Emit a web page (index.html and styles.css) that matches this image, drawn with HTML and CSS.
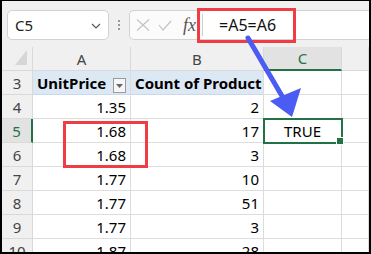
FILE: index.html
```html
<!DOCTYPE html>
<html lang="en">
<head>
  <meta charset="UTF-8" />
  <title>Excel - Compare cells</title>
  <link rel="stylesheet" href="styles.css">
</head>
<body>

<div class="frame">
  <div class="toolbar">
    <div class="namebox">
      <span>C5</span>
      <svg class="chev" width="10" height="6" viewBox="0 0 10 6"><path d="M1 1 L5 5 L9 1" fill="none" stroke="#555" stroke-width="1.2"/></svg>
    </div>
    <div class="dots"><i></i><i></i><i></i></div>
    <div class="fxbox">
      <svg class="tool" width="14" height="12" viewBox="0 0 14 12"><path d="M1 0.5 L13 11.5 M13 0.5 L1 11.5" stroke="#c4c4c4" stroke-width="1.2"/></svg>
      <svg class="tool" width="14" height="11" viewBox="0 0 14 11"><path d="M1 5 L5 10 L13 1" fill="none" stroke="#c4c4c4" stroke-width="1.2"/></svg>
      <span class="fx">fx</span>
      <div class="sep"></div>
      <div class="formula">=A5=A6</div>
    </div>
  </div>

  <div class="sheet">
    <div class="corner">
      <svg width="12" height="15" viewBox="0 0 12 15"><polygon points="12,0 12,15 0,15" fill="#d6d6d6"/></svg>
    </div>
    <div class="colhead">A</div>
    <div class="colhead">B</div>
    <div class="colhead active">C</div>
    <div class="colhead"></div>

    <div class="rowhead">3</div>
    <div class="cell pivot">UnitPrice
      <span class="filter"><svg width="7" height="4" viewBox="0 0 7 4"><polygon points="0,0 7,0 3.5,4" fill="#666"/></svg></span>
    </div>
    <div class="cell pivot">Count of Product</div>
    <div class="cell"></div>
    <div class="cell"></div>

    <div class="rowhead">4</div>
    <div class="cell num">1.35</div>
    <div class="cell num">2</div>
    <div class="cell"></div>
    <div class="cell"></div>

    <div class="rowhead active">5</div>
    <div class="cell num">1.68</div>
    <div class="cell num">17</div>
    <div class="cell selected">TRUE<span class="handle"></span></div>
    <div class="cell"></div>

    <div class="rowhead">6</div>
    <div class="cell num">1.68</div>
    <div class="cell num">3</div>
    <div class="cell"></div>
    <div class="cell"></div>

    <div class="rowhead">7</div>
    <div class="cell num">1.77</div>
    <div class="cell num">10</div>
    <div class="cell"></div>
    <div class="cell"></div>

    <div class="rowhead">8</div>
    <div class="cell num">1.77</div>
    <div class="cell num">51</div>
    <div class="cell"></div>
    <div class="cell"></div>

    <div class="rowhead">9</div>
    <div class="cell num">1.77</div>
    <div class="cell num">3</div>
    <div class="cell"></div>
    <div class="cell"></div>

    <div class="rowhead">10</div>
    <div class="cell num">1.87</div>
    <div class="cell num">28</div>
    <div class="cell"></div>
    <div class="cell"></div>
  </div>
</div>

<!-- callouts drawn over the screenshot -->
<svg class="marks" width="371" height="254" viewBox="0 0 371 254">
  <rect x="198.5" y="9.5" width="96" height="32" fill="none" stroke="#ee3d45" stroke-width="3"/>
  <rect x="64.5" y="122.5" width="82" height="44" fill="none" stroke="#ee3d45" stroke-width="3"/>
  <line x1="248" y1="38" x2="282" y2="96" stroke="#4a5cf2" stroke-width="5" stroke-linecap="round"/>
  <polygon points="270,101 301,88 292,117" fill="#4a5cf2"/>
</svg>

</body>
</html>
```

FILE: styles.css
```css
body {
  margin: 0;
  position: relative;
  font-family: 'Noto Sans', sans-serif;
  color: #000;
}

.frame {
  width: 371px;
  height: 254px;
  box-sizing: border-box;
  border: 2px solid #000;
  border-top-width: 1px;
  overflow: hidden;
  background: #fff;
}

.toolbar {
  height: 46px;
  box-sizing: border-box;
  padding: 9px 0 0 5px;
  background: #f0f0f0;
  display: flex;
  align-items: flex-start;
}

.namebox {
  width: 102px;
  height: 30px;
  box-sizing: border-box;
  border: 1px solid #d2d2d2;
  border-radius: 5px;
  background: #fff;
  display: flex;
  align-items: center;
  justify-content: space-between;
  padding: 0 7px 0 7px;
  font-size: 15px;
  color: #222;
}

.chev {
  margin-top: 2px;
}

.dots {
  width: 20px;
  height: 30px;
  display: flex;
  flex-direction: column;
  align-items: center;
  justify-content: center;
  gap: 2px;
}

.dots i {
  width: 2px;
  height: 2px;
  background: #999;
}

.fxbox {
  flex: 1;
  height: 30px;
  box-sizing: border-box;
  border: 1px solid #d2d2d2;
  border-right: none;
  border-radius: 5px 0 0 5px;
  background: #fbfbfb;
  display: flex;
  align-items: center;
  padding-left: 6px;
}

.tool {
  margin-right: 8px;
}

.fx {
  font-family: 'Liberation Serif', serif;
  font-style: italic;
  font-size: 18px;
  color: #555;
  margin-left: 3px;
}

.sep {
  width: 1px;
  height: 22px;
  background: #cfcfcf;
  margin-left: 6px;
}

.formula {
  flex: 1;
  height: 100%;
  background: #fff;
  display: flex;
  align-items: center;
  padding-left: 16px;
  font-size: 16px;
  color: #111;
}

.sheet {
  display: grid;
  grid-template-columns: 31px 98px 133px 78px 1fr;
  grid-auto-rows: 24px;
  font-size: 15px;
}

.corner,
.colhead,
.rowhead {
  background: #f0f0f0;
  color: #444;
  box-sizing: border-box;
  border-right: 1px solid #d9d9d9;
  border-bottom: 1px solid #d9d9d9;
  display: flex;
  align-items: center;
  justify-content: center;
}

.corner {
  align-items: flex-end;
  justify-content: flex-end;
  padding: 0 5px 5px 0;
}

.colhead.active {
  background: #e2e2e2;
  color: #217346;
  border-bottom: 2px solid #217346;
}

.rowhead.active {
  background: #e2e2e2;
  color: #217346;
  border-right: 2px solid #217346;
}

.cell {
  box-sizing: border-box;
  border-right: 1px solid #dcdcdc;
  border-bottom: 1px solid #dcdcdc;
  display: flex;
  align-items: center;
  padding: 0 4px;
  white-space: nowrap;
}

.pivot {
  background: #dde8f5;
  font-weight: bold;
  border-bottom-color: #c9d8ea;
  position: relative;
}

.filter {
  position: absolute;
  right: 4px;
  bottom: 1px;
  width: 13px;
  height: 15px;
  box-sizing: border-box;
  border: 1px solid #9a9a9a;
  background: #f6f6f6;
  display: flex;
  align-items: center;
  justify-content: center;
}

.num {
  justify-content: flex-end;
}

.selected {
  justify-content: center;
  position: relative;
  outline: 2px solid #217346;
  outline-offset: -1px;
}

.handle {
  position: absolute;
  right: -3px;
  bottom: -3px;
  width: 6px;
  height: 6px;
  background: #217346;
  border: 1px solid #fff;
}

.marks {
  position: absolute;
  top: 0;
  left: 0;
  pointer-events: none;
}
```
